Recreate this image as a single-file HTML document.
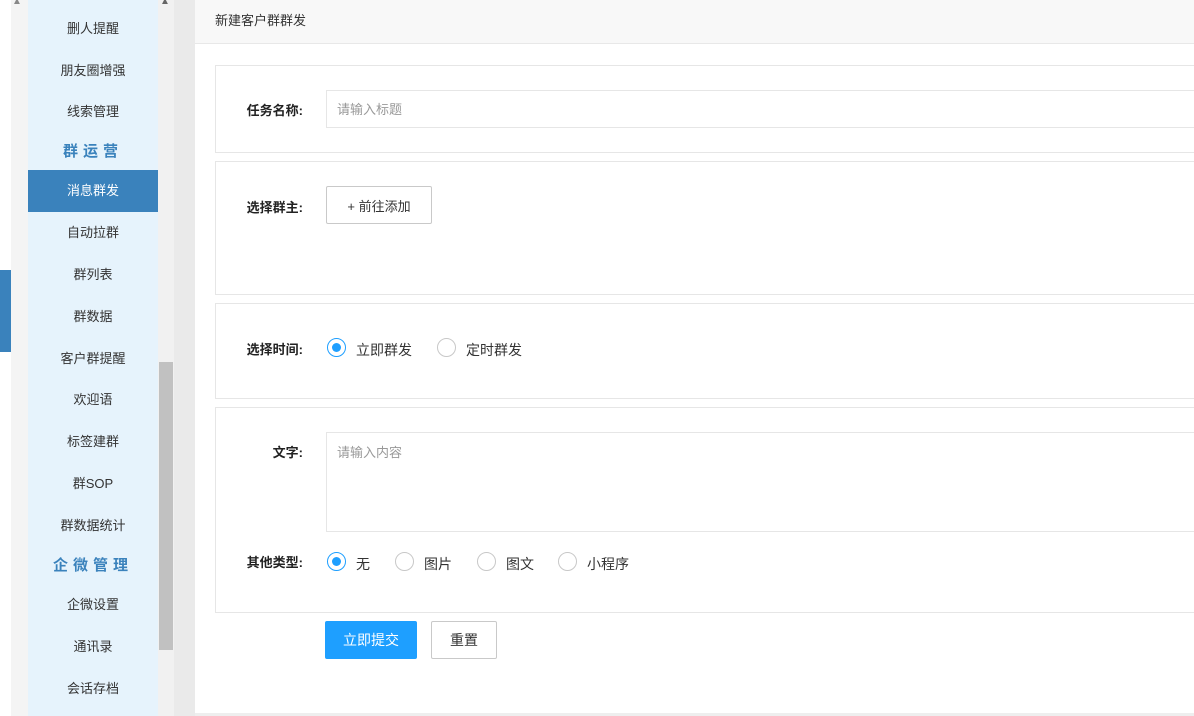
<!DOCTYPE html>
<html><head><meta charset="utf-8"><style>
*{box-sizing:border-box;margin:0;padding:0}
body{width:1194px;height:716px;overflow:hidden;background:#fff;font-family:"Liberation Sans","Noto Sans CJK SC",sans-serif;position:relative;font-size:13px;color:#333}
.abs{position:absolute}
.menu{left:28px;top:0;width:130px;height:716px;background:#e6f3fc}
.mi{position:absolute;left:0;width:130px;text-align:center;font-size:13px;color:#333;line-height:20px}
.sec{color:#3a82bc;font-size:15px;font-weight:bold;letter-spacing:5px}
.card{position:absolute;left:215px;width:990px;border:1px solid #e6e6e6;background:#fff}
.lbl{position:absolute;font-weight:bold;font-size:13px;color:#222;text-align:right;width:90px;left:213px}
.radio{position:absolute;width:19px;height:19px;border:1px solid #c8c8c8;border-radius:50%;background:#fff}
.radio.on{border-color:#1e9fff}
.radio.on::after{content:"";position:absolute;left:4px;top:4px;width:9px;height:9px;border-radius:50%;background:#1e9fff}
.rt{position:absolute;font-size:14px;color:#333}
</style></head><body>
<div class="abs" style="left:11px;top:0;width:17px;height:716px;background:#f4f4f4"></div>
<div class="abs" style="left:0;top:270px;width:11px;height:82px;background:#3a82bc"></div>
<div class="abs menu">
<div class="mi" style="top:19px">删人提醒</div>
<div class="mi" style="top:61px">朋友圈增强</div>
<div class="mi" style="top:102px">线索管理</div>
<div class="mi sec" style="top:142px">群运营</div>
<div class="mi" style="top:170px;height:42px;line-height:42px;background:#3a82bc;color:#fff">消息群发</div>
<div class="mi" style="top:223px">自动拉群</div>
<div class="mi" style="top:265px">群列表</div>
<div class="mi" style="top:307px">群数据</div>
<div class="mi" style="top:349px">客户群提醒</div>
<div class="mi" style="top:390px">欢迎语</div>
<div class="mi" style="top:432px">标签建群</div>
<div class="mi" style="top:474px">群SOP</div>
<div class="mi" style="top:516px">群数据统计</div>
<div class="mi sec" style="top:556px">企微管理</div>
<div class="mi" style="top:595px">企微设置</div>
<div class="mi" style="top:637px">通讯录</div>
<div class="mi" style="top:679px">会话存档</div>
</div>
<div class="abs" style="left:158px;top:0;width:16px;height:716px;background:#f1f1f1"></div>
<div class="abs" style="left:159px;top:362px;width:14px;height:288px;background:#c1c1c1"></div>
<div class="abs" style="left:12px;top:-4px;color:#888;font-size:10px">▲</div>
<div class="abs" style="left:160px;top:-4px;color:#666;font-size:10px">▲</div>
<div class="abs" style="left:174px;top:0;width:21px;height:716px;background:#eaeaea"></div>
<div class="abs" style="left:195px;top:0;width:999px;height:44px;background:#f8f8f8;border-bottom:1px solid #e8e8e8"></div>
<div class="abs" style="left:215px;top:10px;font-size:13px;color:#333">新建客户群群发</div>
<div class="abs" style="left:195px;top:713px;width:999px;height:3px;background:#eee"></div>

<div class="card" style="top:65px;height:88px"></div>
<div class="lbl" style="top:100px">任务名称:</div>
<div class="abs" style="left:326px;top:90px;width:880px;height:38px;border:1px solid #e6e6e6;padding:1px 10px 0;line-height:36px;color:#999;font-size:13px">请输入标题</div>

<div class="card" style="top:161px;height:134px"></div>
<div class="lbl" style="top:197px">选择群主:</div>
<div class="abs" style="left:326px;top:186px;width:106px;height:38px;border:1px solid #c9c9c9;border-radius:2px;text-align:center;line-height:40px;font-size:13px;color:#333">+ 前往添加</div>

<div class="card" style="top:303px;height:96px"></div>
<div class="lbl" style="top:339px">选择时间:</div>
<div class="radio on" style="left:327px;top:338px"></div><div class="rt" style="left:356px;top:340px">立即群发</div>
<div class="radio" style="left:437px;top:338px"></div><div class="rt" style="left:466px;top:340px">定时群发</div>

<div class="card" style="top:407px;height:206px"></div>
<div class="lbl" style="top:442px">文字:</div>
<div class="abs" style="left:326px;top:432px;width:880px;height:100px;border:1px solid #e6e6e6;padding:9px 10px;color:#999;font-size:13px">请输入内容</div>
<div class="lbl" style="top:552px">其他类型:</div>
<div class="radio on" style="left:327px;top:552px"></div><div class="rt" style="left:356px;top:554px">无</div>
<div class="radio" style="left:395px;top:552px"></div><div class="rt" style="left:424px;top:554px">图片</div>
<div class="radio" style="left:477px;top:552px"></div><div class="rt" style="left:506px;top:554px">图文</div>
<div class="radio" style="left:558px;top:552px"></div><div class="rt" style="left:587px;top:554px">小程序</div>

<div class="abs" style="left:325px;top:621px;width:92px;height:38px;background:#1e9fff;color:#fff;text-align:center;line-height:38px;font-size:14px;border-radius:2px">立即提交</div>
<div class="abs" style="left:431px;top:621px;width:66px;height:38px;border:1px solid #c9c9c9;color:#333;text-align:center;line-height:36px;font-size:14px;border-radius:2px">重置</div>
</body></html>
